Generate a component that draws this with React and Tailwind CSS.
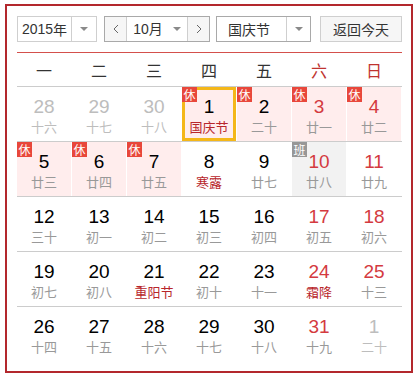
import React from "react";

const cjk = { fontFamily: '"Noto Sans CJK SC", "Noto Sans", sans-serif' };
const num = { fontFamily: '"Liberation Sans", Arial, sans-serif' };

const weekdays = ["一", "二", "三", "四", "五", "六", "日"];

// d: day, l: lunar text, f: festival (red lunar), out: other month
const rows = [
    [
        { d: 28, l: "十六", out: true },
        { d: 29, l: "十七", out: true },
        { d: 30, l: "十八", out: true },
        { d: 1, l: "国庆节", f: true, rest: true, sel: true },
        { d: 2, l: "二十", rest: true },
        { d: 3, l: "廿一", rest: true, red: true },
        { d: 4, l: "廿二", rest: true, red: true },
    ],
    [
        { d: 5, l: "廿三", rest: true },
        { d: 6, l: "廿四", rest: true },
        { d: 7, l: "廿五", rest: true },
        { d: 8, l: "寒露", f: true },
        { d: 9, l: "廿七" },
        { d: 10, l: "廿八", work: true, red: true },
        { d: 11, l: "廿九", red: true },
    ],
    [
        { d: 12, l: "三十" },
        { d: 13, l: "初一" },
        { d: 14, l: "初二" },
        { d: 15, l: "初三" },
        { d: 16, l: "初四" },
        { d: 17, l: "初五", red: true },
        { d: 18, l: "初六", red: true },
    ],
    [
        { d: 19, l: "初七" },
        { d: 20, l: "初八" },
        { d: 21, l: "重阳节", f: true },
        { d: 22, l: "初十" },
        { d: 23, l: "十一" },
        { d: 24, l: "霜降", f: true, red: true },
        { d: 25, l: "十三", red: true },
    ],
    [
        { d: 26, l: "十四" },
        { d: 27, l: "十五" },
        { d: 28, l: "十六" },
        { d: 29, l: "十七" },
        { d: 30, l: "十八" },
        { d: 31, l: "十九", red: true },
        { d: 1, l: "二十", out: true },
    ],
];

function Arrow() {
    return (
        <span className="block h-0 w-0 border-x-[4px] border-t-[4px] border-x-transparent border-t-[#8a8a8a]"></span>
    );
}

function Chevron({ right }) {
    return (
        <svg width="6" height="10" viewBox="0 0 6 10">
            <polyline
                points={right ? "1,1 5,5 1,9" : "5,1 1,5 5,9"}
                fill="none"
                stroke="#666"
                strokeWidth="1"
            />
        </svg>
    );
}

function DayCell({ day }) {
    let bg = "";
    if (day.rest) bg = "bg-[#ffeded]";
    if (day.work) bg = "bg-[#f2f2f2]";

    let numColor = "text-[#000]";
    if (day.red) numColor = "text-[#d43a3f]";
    if (day.out) numColor = "text-[#bdbdbd]";

    let lunarColor = "text-[#999]";
    if (day.f) lunarColor = "text-[#b8262b]";
    if (day.out) lunarColor = "text-[#bdbdbd]";

    return (
        <div className={`relative h-[54px] text-center ${bg}`}>
            {day.sel && (
                <div className="absolute inset-0 border-[3px] border-[#f4b719]"></div>
            )}
            {(day.rest || day.work) && (
                <span
                    className={`absolute left-0 top-0 z-10 flex h-[15px] w-[15px] items-center justify-center text-[12px] leading-none text-white ${day.rest ? "bg-[#e8473b]" : "bg-[#979797]"}`}
                    style={cjk}
                >
                    {day.rest ? "休" : "班"}
                </span>
            )}
            <div className={`pt-[10px] text-[19px] leading-[20px] ${numColor}`} style={num}>
                {day.d}
            </div>
            <div className={`text-[13px] leading-[20px] ${lunarColor}`} style={cjk}>
                {day.l}
            </div>
        </div>
    );
}

export default function App() {
    return (
        <div className="bg-white pl-[5px] pt-[4px]">
            <div className="w-[408px] border-2 border-[#b3282d] pb-[10px] pl-[10px] pr-[9px] pt-[10px]">
                {/* Toolbar */}
                <div className="flex h-[26px] text-[14px] text-[#333]" style={cjk}>
                    <div className="flex w-[80px] border border-[#cfcfcf]">
                        <span className="flex flex-1 items-center justify-center" style={cjk}>
                            <span style={num}>2015</span>年
                        </span>
                        <span className="flex w-[25px] items-center justify-center border-l border-[#cfcfcf]">
                            <Arrow />
                        </span>
                    </div>
                    <div className="ml-[7px] flex w-[106px] border border-[#a9a9a9]">
                        <span className="flex w-[22px] items-center justify-center border-r border-[#cfcfcf] bg-[#f6f6f6]">
                            <Chevron />
                        </span>
                        <span className="flex flex-1 items-center justify-center gap-[10px]">
                            <span>
                                <span style={num}>10</span>月
                            </span>
                            <Arrow />
                        </span>
                        <span className="flex w-[22px] items-center justify-center border-l border-[#cfcfcf] bg-[#f6f6f6]">
                            <Chevron right />
                        </span>
                    </div>
                    <div className="ml-[6px] flex w-[95px] border border-[#a9a9a9]">
                        <span className="flex flex-1 items-center pl-[11px]">国庆节</span>
                        <span className="flex w-[24px] items-center justify-center border-l border-[#cfcfcf]">
                            <Arrow />
                        </span>
                    </div>
                    <button className="ml-auto flex w-[82px] items-center justify-center border border-[#cfcfcf] bg-[#f6f6f6] text-[14px] text-[#333]" style={cjk}>
                        返回今天
                    </button>
                </div>

                {/* Red separator */}
                <div className="mt-[10px] h-px bg-[#d4504c]"></div>

                {/* Weekday header */}
                <div className="grid h-[34px] grid-cols-[repeat(7,54px)] gap-x-px border-b border-[#cccccc]">
                    {weekdays.map((w, i) => (
                        <div
                            key={w}
                            className={`flex items-center justify-center text-[16px] ${i >= 5 ? "text-[#c0332f]" : "text-[#333]"}`}
                            style={cjk}
                        >
                            {w}
                        </div>
                    ))}
                </div>

                {/* Days */}
                {rows.map((row, r) => (
                    <div
                        key={r}
                        className={`grid grid-cols-[repeat(7,54px)] gap-x-px ${r < rows.length - 1 ? "border-b border-[#cccccc]" : ""}`}
                    >
                        {row.map((day, i) => (
                            <DayCell key={i} day={day} />
                        ))}
                    </div>
                ))}
            </div>
        </div>
    );
}
